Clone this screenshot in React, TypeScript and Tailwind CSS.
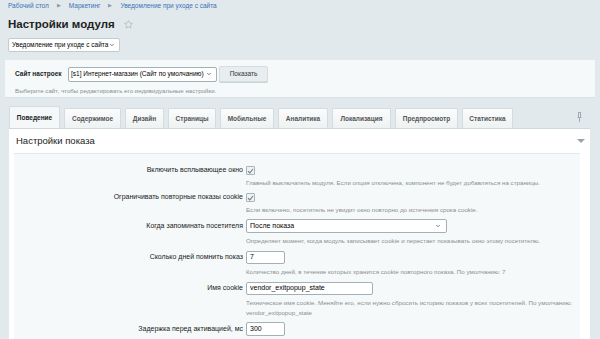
import { ChevronDown, Star } from "lucide-react";

const tabs = [
  { name: "Поведение", cls: "w-[51px]", active: true },
  { name: "Содержимое", cls: "w-[57px]" },
  { name: "Дизайн", cls: "w-[39px]" },
  { name: "Страницы", cls: "w-[48px]" },
  { name: "Мобильные", cls: "w-[54px]" },
  { name: "Аналитика", cls: "w-[50px]" },
  { name: "Локализация", cls: "w-[59px]" },
  { name: "Предпросмотр", cls: "w-[63px]" },
  { name: "Статистика", cls: "w-[51px]" },
];

function Checkbox() {
  return (
    <span className="flex h-[9px] w-[9px] items-center justify-center rounded-[1px] border border-[#a9b4b8] bg-[#eef2f3]">
      <svg width="7" height="6" viewBox="0 0 7 6" fill="none">
        <path d="M1 3.2 2.8 5 6 1" stroke="#6f7b80" strokeWidth="1.1" />
      </svg>
    </span>
  );
}

function Input({ value, w }: { value: string; w: string }) {
  return (
    <div className={`flex h-full items-center rounded-[2px] border border-[#a3b0b5] bg-white px-[3px] text-[7px] text-black ${w}`}>
      {value}
    </div>
  );
}

function Row({
  label,
  h,
  mt,
  control,
  hint,
  lh = "leading-[9px]",
}: {
  label: string;
  h: string;
  mt: string;
  control: React.ReactNode;
  hint?: React.ReactNode;
  lh?: string;
}) {
  return (
    <div className={`grid grid-cols-[229px_1fr] gap-x-[3px] ${mt}`}>
      <div className={`flex items-center justify-end text-[7px] text-[#222] ${h}`}>{label}</div>
      <div className={`flex items-center ${h}`}>{control}</div>
      {hint && (
        <>
          <div />
          <div className={`mt-[3px] whitespace-nowrap text-[6.2px] text-[#8a8f92] ${lh}`}>{hint}</div>
        </>
      )}
    </div>
  );
}

export default function App() {
  return (
    <div className="h-[339px] w-[600px] overflow-hidden bg-[#e1e9ec] font-['Liberation_Sans',Arial,sans-serif]">
      <div className="flex items-center gap-[8px] px-[8px] pt-[1px] text-[6.5px] text-[#3d71b6]">
        <span>Рабочий стол</span>
        <span className="text-[5px] text-[#8c9aa0]">▶</span>
        <span>Маркетинг</span>
        <span className="text-[5px] text-[#8c9aa0]">▶</span>
        <span>Уведомление при уходе с сайта</span>
      </div>

      <div className="mt-[5px] flex items-center gap-[9px] px-[8px]">
        <h1 className="text-[11.5px] font-bold text-[#222]">Настройки модуля</h1>
        <Star size={9} className="text-[#a9b3b7]" strokeWidth={2} />
      </div>

      <div className="ml-[8px] mt-[5px] flex h-[14px] w-[112px] items-center justify-between rounded-[2px] border border-[#c2cbce] bg-white pl-[3px] pr-[4px] text-[6.5px] text-black">
        <span>Уведомление при уходе с сайта</span>
        <ChevronDown size={6} strokeWidth={3} className="text-[#555]" />
      </div>

      <div className="mx-[5px] mt-[8px] h-[38px] border-b border-[#d8e1e4] bg-[#f5f9f9] px-[10px] pt-[6px]">
        <div className="flex items-center">
          <span className="w-[53px] text-[6.5px] font-bold text-[#222]">Сайт настроек</span>
          <div className="flex h-[15px] w-[149px] items-center justify-between rounded-[2px] border border-[#a3b0b5] bg-white pl-[2px] pr-[4px] text-[6.5px] text-black">
            <span>[s1] Интернет-магазин (Сайт по умолчанию)</span>
            <ChevronDown size={6} strokeWidth={3} className="text-[#555]" />
          </div>
          <button className="ml-[2px] flex h-[16px] w-[49px] items-center justify-center rounded-[2px] border border-[#d5dde0] bg-[#e8eef0] text-[6.5px] text-[#333] shadow-[0_1px_0_#c9d2d5]">
            Показать
          </button>
        </div>
        <div className="mt-[4px] text-[6.2px] text-[#8a8f92]">Выберите сайт, чтобы редактировать его индивидуальные настройки.</div>
      </div>

      <div className="mt-[8px] flex items-end justify-between pl-[9px] pr-[18px]">
        <div className="flex items-end gap-[4px]">
          {tabs.map((t) => (
            <div
              key={t.name}
              className={
                t.active
                  ? `flex h-[22px] items-center justify-center rounded-t-[2px] border border-b-0 border-[#d4dcdf] bg-[#f5f8f8] text-[6.5px] font-bold text-[#222] ${t.cls}`
                  : `flex h-[20px] items-center justify-center rounded-t-[2px] border border-b-0 border-[#d4dcdf] bg-gradient-to-b from-[#fbfcfc] to-[#eef2f3] text-[6.5px] font-bold text-[#555] ${t.cls}`
              }
            >
              {t.name}
            </div>
          ))}
        </div>
        <svg width="5" height="10" viewBox="0 0 5 10" className="mb-[6px]">
          <path d="M1 0.5h3M1.5 1v4M3.5 1v4M0.5 5.5h4M2.5 6v4" stroke="#a2acb0" strokeWidth="1" />
        </svg>
      </div>

      <div className="ml-[9px] mr-[10px] h-[220px] border-t border-[#cfd8db] bg-white pl-[5px] pr-[10px]">
        <div className="flex h-[25px] items-center justify-between border-b border-[#e3e9eb] pl-[2px]">
          <span className="text-[9.5px] text-[#222]">Настройки показа</span>
          <span className="mr-[-5px] h-0 w-0 border-x-[4px] border-t-[4px] border-x-transparent border-t-[#9aa3a7]" />
        </div>
        <div className="h-[200px] bg-[#f5f9f9] pt-[12px]">
          <Row
            label="Включить всплывающее окно"
            h="h-[9px]"
            mt="mt-0"
            control={<Checkbox />}
            hint="Главный выключатель модуля. Если опция отключена, компонент не будет добавляться на страницы."
          />
          <Row
            label="Ограничивать повторные показы cookie"
            h="h-[9px]"
            mt="mt-[6px]"
            control={<Checkbox />}
            hint="Если включено, посетитель не увидит окно повторно до истечения срока cookie."
          />
          <Row
            label="Когда запоминать посетителя"
            h="h-[14px]"
            mt="mt-[5px]"
            control={
              <div className="flex h-full w-[201px] items-center justify-between rounded-[2px] border border-[#a3b0b5] bg-white pl-[3px] pr-[5px] text-[7px] text-black">
                <span>После показа</span>
                <ChevronDown size={6} strokeWidth={3} className="text-[#555]" />
              </div>
            }
            hint="Определяет момент, когда модуль записывает cookie и перестает показывать окно этому посетителю."
          />
          <Row
            label="Сколько дней помнить показ"
            h="h-[13px]"
            mt="mt-[6px]"
            control={<Input value="7" w="w-[39px]" />}
            hint="Количество дней, в течение которых хранится cookie повторного показа. По умолчанию: 7"
          />
          <Row
            label="Имя cookie"
            h="h-[13px]"
            mt="mt-[6px]"
            lh="leading-[10px]"
            control={<Input value="vendor_exitpopup_state" w="w-[127px]" />}
            hint={
              <>
                Техническое имя cookie. Меняйте его, если нужно сбросить историю показов у всех посетителей. По умолчанию:
                <br />
                vendor_exitpopup_state
              </>
            }
          />
          <Row
            label="Задержка перед активацией, мс"
            h="h-[14px]"
            mt="mt-[4px]"
            control={<Input value="300" w="w-[39px]" />}
          />
        </div>
      </div>
    </div>
  );
}
